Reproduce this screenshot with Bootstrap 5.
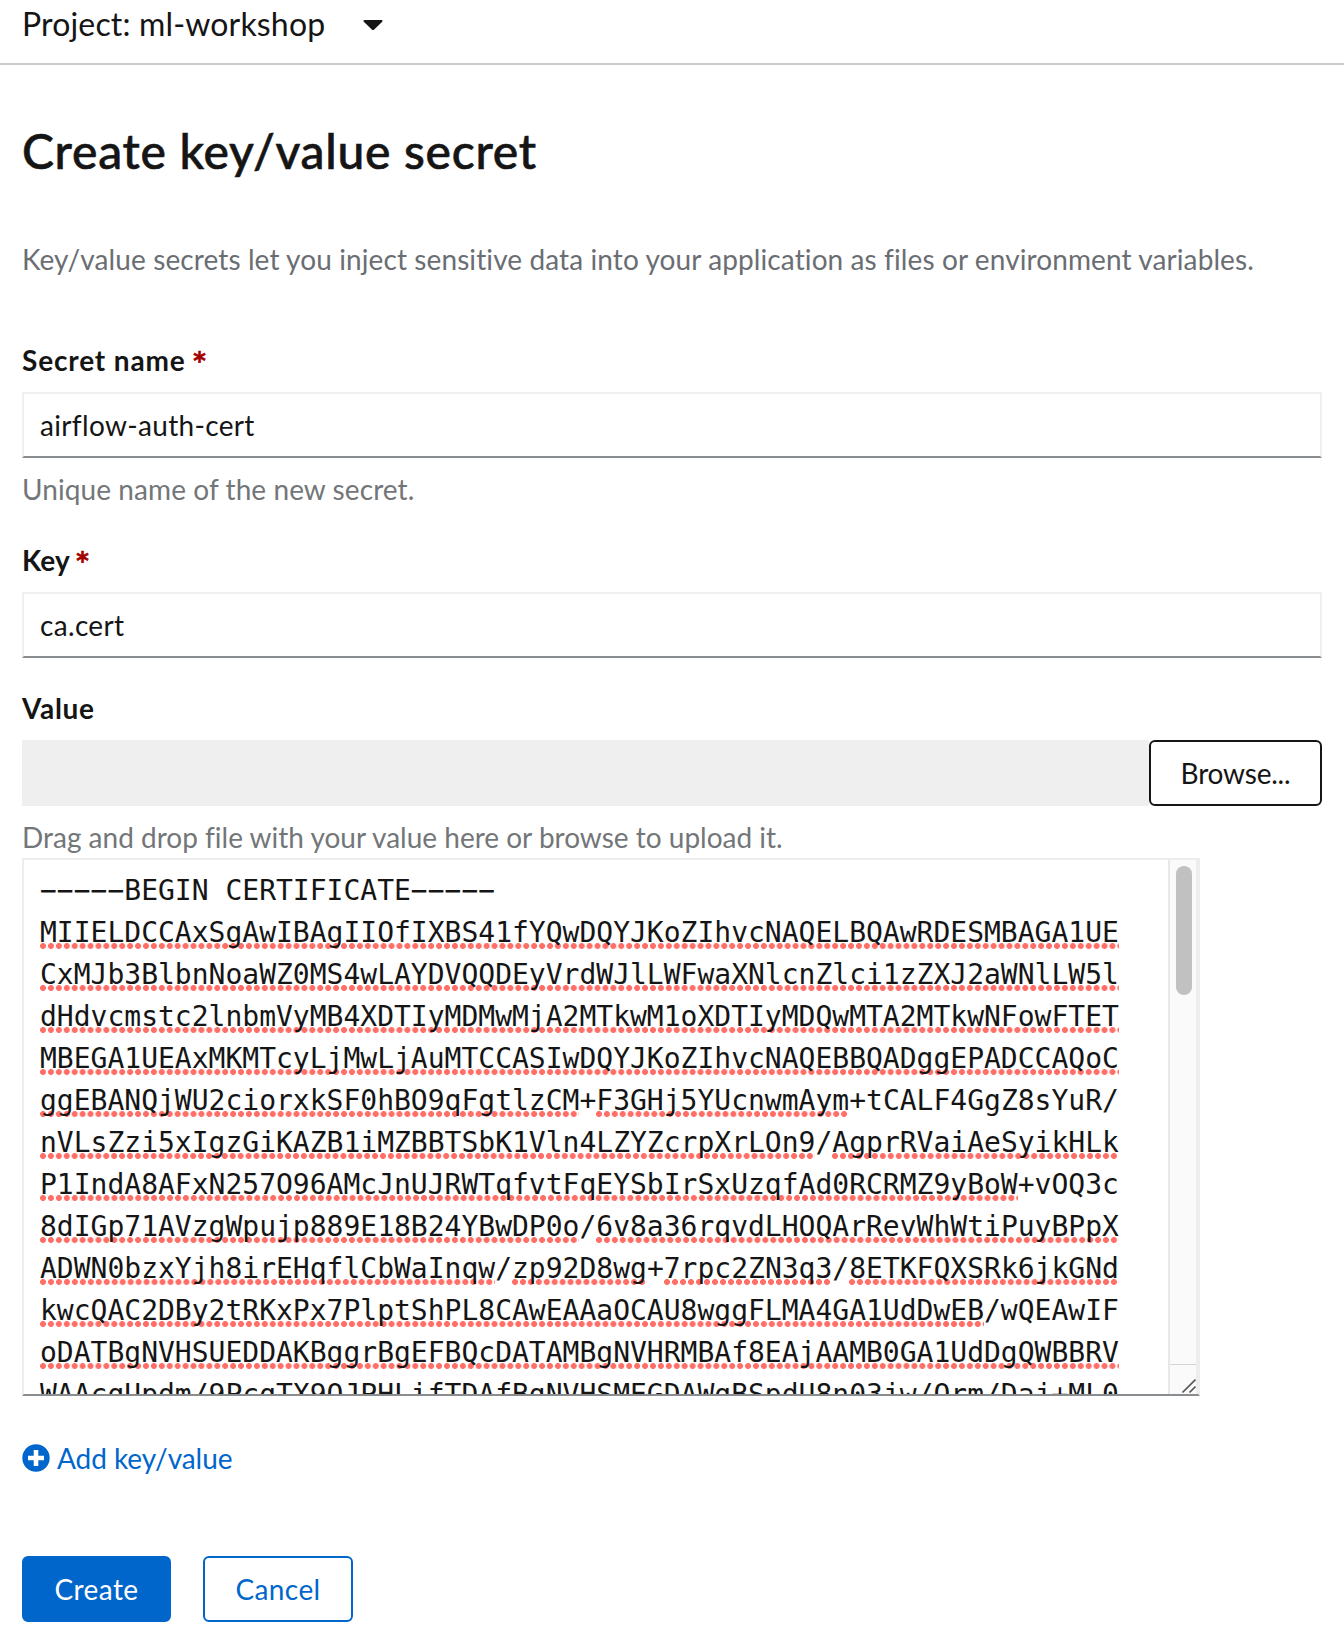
<!DOCTYPE html>
<html lang="en">
<head>
<meta charset="utf-8">
<meta name="viewport" content="width=device-width, initial-scale=1">
<title>Create key/value secret</title>
<link href="https://cdn.jsdelivr.net/npm/bootstrap@5.3.0/dist/css/bootstrap.min.css" rel="stylesheet">
<style>
  body { font-family: Lato, "Open Sans", sans-serif; font-size: 28px; line-height: 42px; color: #151515; background: #fff; height: 1646px; overflow: hidden; font-variant-ligatures: none; }
  .project-bar { height: 65px; padding: 0 22px 16px; border-bottom: 2px solid #ccc; font-size: 32px; line-height: 48px; letter-spacing: .16px; }
  .project-caret { margin: 2px 0 0 38px; }
  .page-body { padding: 55px 22px 0; }
  .page-title { font-size: 48px; line-height: 62px; font-weight: 500; margin: 0; letter-spacing: .73px; -webkit-text-stroke: .6px #151515; }
  .intro { color: #6a6e73; margin: 56px 0 59px; letter-spacing: .1px; white-space: nowrap; }
  .form-label { font-weight: 700; margin: 0; display: block; height: 53px; letter-spacing: .85px; }
  .label-key { letter-spacing: .15px; margin-top: 29px; }
  .label-value { letter-spacing: .7px; margin-top: 29px; }
  .req { color: #a30000; font-family: "DejaVu Sans", sans-serif; font-size: 24px; line-height: 1; letter-spacing: 0; vertical-align: 2px; -webkit-text-stroke: .6px #a30000; }
  .form-control, .form-control:focus { height: 66px; padding: 0 17px 0 16px; font-size: 28px; line-height: 42px; letter-spacing: .33px; color: #151515; border: 2px solid #f0f0f0; border-bottom-color: #8a8d90; border-radius: 0; box-shadow: none; }
  .form-text { color: #737679; font-size: 28px; line-height: 42px; margin: 10px 0 0; letter-spacing: .08px; }
  .form-text.drop-hint { letter-spacing: 0; }
  .file-name { background: #efefef; }
  .btn { height: 66px; font-size: 28px; line-height: 42px; border: 2px solid; border-radius: 6px; padding: 10px 0; letter-spacing: .4px; }
  .btn-browse { width: 173px; color: #151515; border-color: #151515; background: #fff; letter-spacing: -.2px; }
  .btn-create { width: 149px; background: #06c; border-color: #06c; color: #fff; }
  .btn-cancel { width: 150px; background: #fff; border-color: #06c; color: #06c; }
  .cert-box { width: 1178px; height: 538px; border: 2px solid #ededed; border-bottom-color: #8a8d90; }
  .cert { font: 28px/42px "DejaVu Sans Mono", monospace; margin: 0; padding: 10px 0 0 16px; overflow: hidden; color: #151515; }
  .cert u { text-decoration: none; background: radial-gradient(circle at 3px 3px, #ff6e67 2.6px, rgba(255,110,103,0) 3.3px) 0 100% / 7.9px 6px; background-repeat: space no-repeat; }
  .scroll-track { width: 30px; background: #fafafa; border-left: 2px solid #e8e8e8; border-right: 2px solid #ededed; }
  .scroll-thumb { width: 16px; height: 129px; border-radius: 8px; background: #c1c1c1; margin: 6px 0 0 6px; }
  .scroll-corner { height: 30px; border-top: 1px solid #d4d4d4; }
  .add-link { color: #06c; margin-top: 41px; text-decoration: none; gap: 7px; letter-spacing: -.05px; }
  .actions { margin-top: 77px; gap: 32px; }
</style>
</head>
<body>
<div class="project-bar d-flex align-items-start">
  <span>Project: ml-workshop</span>
  <svg class="project-caret" width="20" height="44" viewBox="0 0 20 44" aria-hidden="true"><path d="M1.6 18h16.8c1.2 0 1.5 1 .8 1.8l-8 7.6c-.8.8-1.6.8-2.4 0l-8-7.6C.1 19 .4 18 1.6 18z" fill="#151515"/></svg>
</div>
<main class="page-body">
  <h1 class="page-title">Create key/value secret</h1>
  <p class="intro">Key/value secrets let you inject sensitive data into your application as files or environment variables.</p>
  <form>
    <label class="form-label" for="secret-name">Secret name <span class="req">*</span></label>
    <input class="form-control" id="secret-name" type="text" value="airflow-auth-cert">
    <p class="form-text">Unique name of the new secret.</p>

    <label class="form-label label-key" for="secret-key">Key <span class="req">*</span></label>
    <input class="form-control" id="secret-key" type="text" value="ca.cert">

    <label class="form-label label-value">Value</label>
    <div class="d-flex">
      <div class="file-name flex-grow-1"></div>
      <button class="btn btn-browse" type="button">Browse...</button>
    </div>
    <p class="form-text drop-hint">Drag and drop file with your value here or browse to upload it.</p>
    <div class="cert-box d-flex">
<pre class="cert flex-grow-1">−−−−−BEGIN CERTIFICATE−−−−−
<u>MIIELDCCAxSgAwIBAgIIOfIXBS41fYQwDQYJKoZIhvcNAQELBQAwRDESMBAGA1UE</u>
<u>CxMJb3BlbnNoaWZ0MS4wLAYDVQQDEyVrdWJlLWFwaXNlcnZlci1zZXJ2aWNlLW5l</u>
<u>dHdvcmstc2lnbmVyMB4XDTIyMDMwMjA2MTkwM1oXDTIyMDQwMTA2MTkwNFowFTET</u>
<u>MBEGA1UEAxMKMTcyLjMwLjAuMTCCASIwDQYJKoZIhvcNAQEBBQADggEPADCCAQoC</u>
<u>ggEBANQjWU2ciorxkSF0hBO9qFgtlzCM</u>+<u>F3GHj5YUcnwmAym</u>+tCALF4GgZ8sYuR/
<u>nVLsZzi5xIgzGiKAZB1iMZBBTSbK1Vln4LZYZcrpXrLOn9</u>/<u>AgprRVaiAeSyikHLk</u>
<u>P1IndA8AFxN257O96AMcJnUJRWTqfvtFqEYSbIrSxUzqfAd0RCRMZ9yBoW</u>+vOQ3c
<u>8dIGp71AVzgWpujp889E18B24YBwDP0o</u>/<u>6v8a36rqvdLHOQArRevWhWtiPuyBPpX</u>
<u>ADWN0bzxYjh8irEHqflCbWaInqw</u>/<u>zp92D8wg</u>+<u>7rpc2ZN3q3</u>/<u>8ETKFQXSRk6jkGNd</u>
<u>kwcQAC2DBy2tRKxPx7PlptShPL8CAwEAAaOCAU8wggFLMA4GA1UdDwEB</u>/wQEAwIF
<u>oDATBgNVHSUEDDAKBggrBgEFBQcDATAMBgNVHRMBAf8EAjAAMB0GA1UdDgQWBBRV</u>
WAAcgUpdm/9PcgTX9OJPHLifTDAfBgNVHSMEGDAWgBSpdU8n03jw/Orm/Daj+ML0</pre>
      <div class="scroll-track d-flex flex-column justify-content-between flex-shrink-0">
        <div class="scroll-thumb"></div>
        <div class="scroll-corner"><svg class="d-block" width="26" height="29" viewBox="0 0 26 29" fill="none" stroke="#555" stroke-width="1.7" aria-hidden="true"><path d="M12.5 27.500L25.500 14.500M19.500 27.500L25.500 21.500"/></svg></div>
      </div>
    </div>
    <a class="add-link d-flex" href="#">
      <svg width="28" height="42" viewBox="0 0 28 42" aria-hidden="true"><circle cx="14" cy="21" r="13.7" fill="#06c"/><path d="M11.7 13h4.6v5.700h5.700v4.600h-5.700v5.700h-4.600v-5.700H6v-4.600h5.700z" fill="#fff"/></svg>
      <span>Add key/value</span>
    </a>
    <div class="actions d-flex">
      <button class="btn btn-create" type="button">Create</button>
      <button class="btn btn-cancel" type="button">Cancel</button>
    </div>
  </form>
</main>
<script src="https://cdn.jsdelivr.net/npm/bootstrap@5.3.0/dist/js/bootstrap.bundle.min.js"></script>
</body>
</html>
